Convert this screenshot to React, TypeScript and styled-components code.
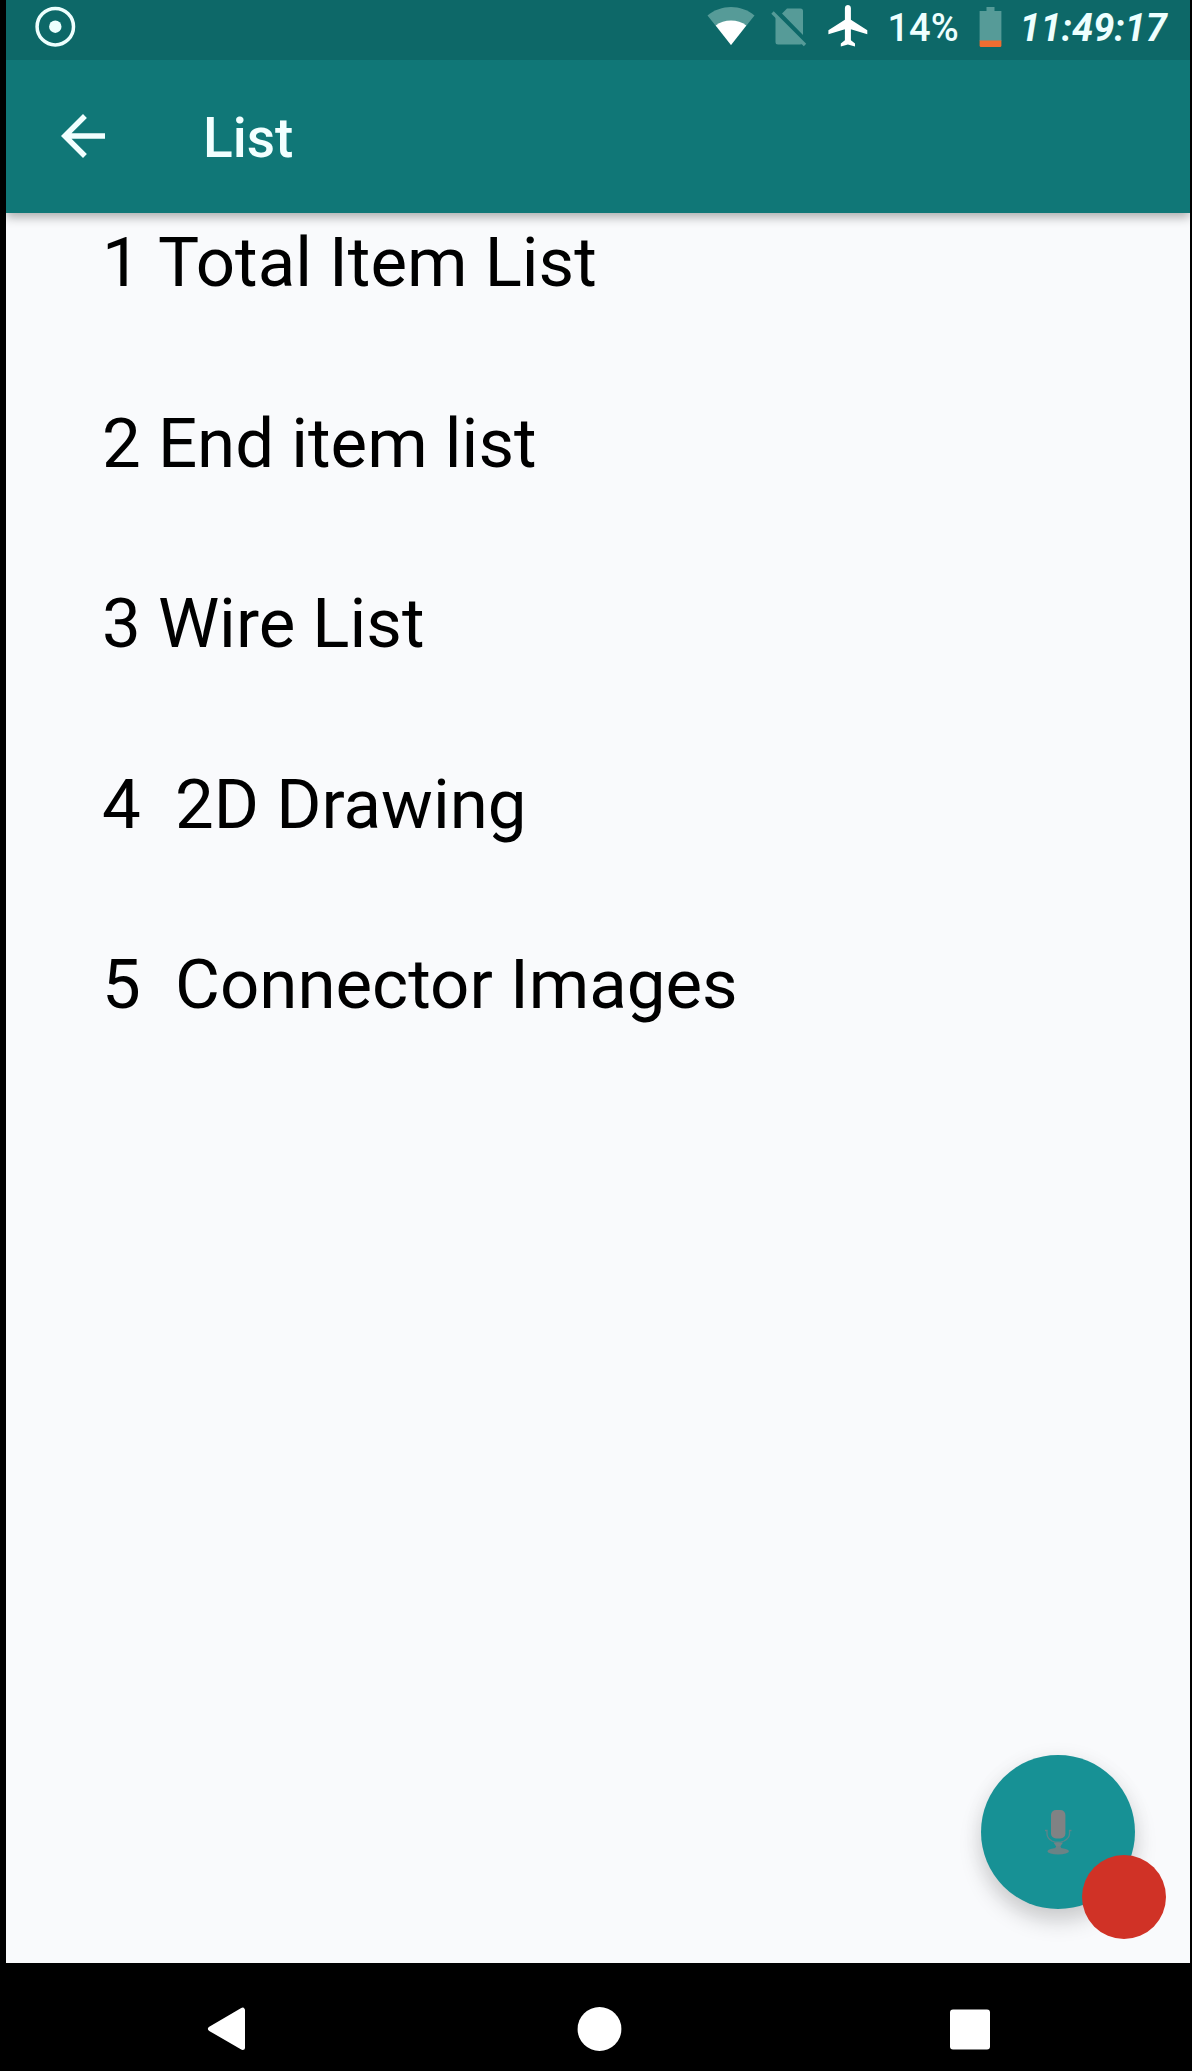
import React from "react";
import styled, { createGlobalStyle } from "styled-components";

const GlobalStyle = createGlobalStyle`
  body {
    margin: 0;
    background: #000;
    font-family: Roboto, "Liberation Sans", sans-serif;
  }
`;

const Device = styled.div`
  box-sizing: border-box;
  width: 1192px;
  height: 2071px;
  padding: 0 2px 0 6px;
  background: #000;
  display: flex;
  flex-direction: column;
  overflow: hidden;
`;

const Header = styled.header`
  flex: none;
  height: 212.5px;
  background: #107777;
  box-shadow: 0 4px 10px rgba(0, 0, 0, 0.32);
  z-index: 1;
`;

const StatusBar = styled.div`
  box-sizing: border-box;
  height: 59.5px;
  padding: 5px 21px 0 29px;
  background: #0d6868;
  display: flex;
  align-items: flex-start;
  justify-content: space-between;
  color: #eefffe;
`;

const StatusGroup = styled.div`
  display: flex;
  align-items: flex-start;
`;

const Icon = styled.svg<{ $gap?: number }>`
  display: block;
  flex: none;
  margin-left: ${(p) => p.$gap ?? 0}px;
`;

const StatusText = styled.span<{ $gap: number; $width: number; $clock?: boolean }>`
  margin-left: ${(p) => p.$gap}px;
  width: ${(p) => p.$width}px;
  font-size: 38px;
  line-height: 47px;
  white-space: nowrap;
  letter-spacing: ${(p) => (p.$clock ? "-0.1px" : "normal")};
  font-weight: ${(p) => (p.$clock ? 700 : 500)};
  font-style: ${(p) => (p.$clock ? "italic" : "normal")};
`;

const AppBar = styled.div`
  height: 153px;
  display: flex;
  align-items: center;
  padding-left: 44px;
`;

const BackButton = styled.button`
  padding: 0;
  border: 0;
  background: none;
  color: #f2ffff;
  display: flex;
`;

const Title = styled.h1`
  margin: 4px 0 0 87px;
  color: #f2ffff;
  font-size: 55px;
  line-height: 64px;
  font-weight: 500;
`;

const Content = styled.main`
  position: relative;
  flex: 1;
  background: #f9fafc;
`;

const List = styled.ol`
  list-style: none;
  margin: 0;
  padding: 9.5px 0 0 96px;
`;

const ListRow = styled.li`
  height: 180.5px;
  font-size: 69px;
  line-height: 81px;
  color: #000;
  white-space: pre;
`;

const RowNumber = styled.span`
  display: inline-block;
`;

const Fab = styled.button`
  position: absolute;
  right: 55px;
  bottom: 54px;
  width: 154px;
  height: 154px;
  padding: 0;
  border: 0;
  border-radius: 50%;
  background: #179195;
  box-shadow: 0 12px 22px rgba(0, 0, 0, 0.18), 0 2px 24px rgba(0, 0, 0, 0.04);
  display: flex;
  align-items: center;
  justify-content: center;
`;

const RecordDot = styled.span`
  position: absolute;
  right: 24px;
  bottom: 23.5px;
  width: 84px;
  height: 84px;
  border-radius: 50%;
  background: #d03226;
`;

const NavBar = styled.nav`
  box-sizing: border-box;
  flex: none;
  height: 108.5px;
  padding: 43px 199px 0 201px;
  background: #000;
  display: flex;
  justify-content: space-between;
  align-items: flex-start;
`;

const rows = [
  { number: "1 ", label: "Total Item List" },
  { number: "2 ", label: "End item list" },
  { number: "3 ", label: "Wire List" },
  { number: "4  ", label: "2D Drawing" },
  { number: "5  ", label: "Connector Images" },
];

export default function App() {
  return (
    <>
      <GlobalStyle />
      <Device>
        <Header>
          <StatusBar>
            <Icon width="42" height="44" viewBox="0 0 42 44">
              <circle cx="20.3" cy="21.7" r="18.2" fill="none" stroke="currentColor" strokeWidth="3.5" />
              <circle cx="20.3" cy="21.7" r="6.2" fill="currentColor" />
            </Icon>
            <StatusGroup>
              <Icon width="48" height="42" viewBox="0 0 48 42">
                <path d="M0.5 10.5C14 -1 34 -1 47.5 10.5L24 40Z" fill="#569b98" />
                <path d="M8.7 20.4C17 14 31 14 39.3 20.4L24 40Z" fill="#fff" />
              </Icon>
              <Icon $gap={16} width="36" height="44" viewBox="0 0 36 44">
                <path
                  d="M11 8.5L16 3.5H29.5Q32 3.5 32 6V30Z M4.5 11L31.5 38.5Q31 39.5 29 39.5H7Q4.5 39.5 4.5 37Z"
                  fill="#569b98"
                />
                <path d="M1.5 7.5L34 40" stroke="#569b98" strokeWidth="3.4" />
              </Icon>
              <Icon $gap={20.5} width="40" height="43" viewBox="0 0 40 43">
                <path
                  d="M39.3 29.2V25.2L22.9 14.8V3.3C22.9 -1.1 16.9 -1.1 16.9 3.3V14.8L.4 25.2V29.2L16.9 24.2V35.3L12.8 38.5V41.6L19.9 39.5L27 41.6V38.5L22.9 35.3V24.2Z"
                  fill="#fff"
                />
              </Icon>
              <StatusText $gap={20} $width={72}>14%</StatusText>
              <Icon $gap={19} width="23" height="43" viewBox="0 0 23 43">
                <path d="M7.5 2H15.5V6H22.4V36H.6V6H7.5Z" fill="#569b98" />
                <path d="M.6 35.5H22.4V40.5Q22.4 42 21 42H2Q.6 42 .6 40.5Z" fill="#ef6d31" />
              </Icon>
              <StatusText $gap={18} $width={149.5} $clock>11:49:17</StatusText>
            </StatusGroup>
          </StatusBar>
          <AppBar>
            <BackButton aria-label="Back">
              <Icon width="66" height="66" viewBox="0 0 24 24">
                <path
                  d="M20 11H7.83l5.59-5.59L12 4l-8 8 8 8 1.41-1.41L7.83 13H20v-2z"
                  fill="currentColor"
                />
              </Icon>
            </BackButton>
            <Title>List</Title>
          </AppBar>
        </Header>
        <Content>
          <List>
            {rows.map((row) => (
              <ListRow key={row.label}>
                <RowNumber>{row.number}</RowNumber>
                {row.label}
              </ListRow>
            ))}
          </List>
          <Fab aria-label="Voice input">
            <Icon width="28" height="46" viewBox="0 0 28 46">
              <rect x="7" y="1" width="14.4" height="28.5" rx="5" fill="#808284" />
              <path
                d="M1 21.5H3V25Q3 29 8 32Q14 34.5 20 32Q25.5 29 25.5 25V21.5H27.5"
                fill="none"
                stroke="#5d858a"
                strokeWidth="1.3"
              />
              <path d="M9.5 33.5H19L16 38H12.5Z" fill="#718386" />
              <ellipse cx="14.2" cy="42.3" rx="10.8" ry="3.2" fill="#6a8386" />
              <path d="M10.5 40L12.5 37H16L18 40Z" fill="#6a8386" />
            </Icon>
          </Fab>
          <RecordDot />
        </Content>
        <NavBar>
          <Icon width="39" height="46" viewBox="0 0 39 46">
            <path
              d="M3.5 22.8L35.5 4.2V41.4Z"
              fill="#fff"
              stroke="#fff"
              strokeWidth="5"
              strokeLinejoin="round"
            />
          </Icon>
          <Icon $gap={3} width="45" height="46" viewBox="0 0 45 46">
            <circle cx="22.5" cy="23" r="21.9" fill="#fff" />
          </Icon>
          <Icon width="42" height="46" viewBox="0 0 42 46">
            <rect x="1" y="3.5" width="40" height="40" rx="3" fill="#fff" />
          </Icon>
        </NavBar>
      </Device>
    </>
  );
}
